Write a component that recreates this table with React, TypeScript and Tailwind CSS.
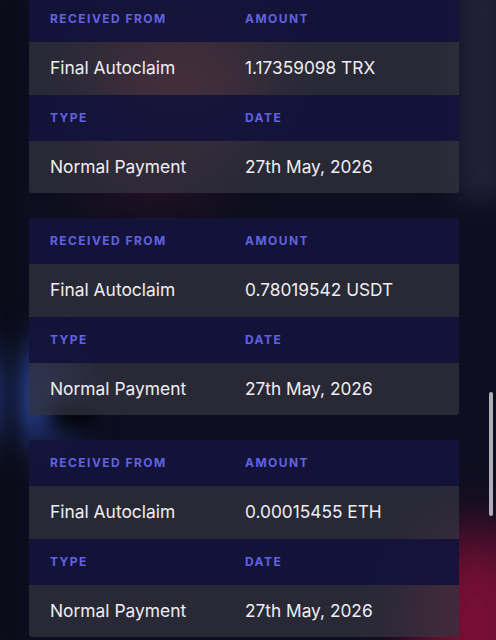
import React from 'react';

type Payment = {
  from: string;
  amount: string;
  type: string;
  date: string;
};

const payments: Payment[] = [
  { from: 'Final Autoclaim', amount: '1.17359098 TRX', type: 'Normal Payment', date: '27th May, 2026' },
  { from: 'Final Autoclaim', amount: '0.78019542 USDT', type: 'Normal Payment', date: '27th May, 2026' },
  { from: 'Final Autoclaim', amount: '0.00015455 ETH', type: 'Normal Payment', date: '27th May, 2026' },
];

const LabelRow = ({ left, right }: { left: string; right: string }) => (
  <div className="flex h-[46px] items-center bg-[#14143b]/95 px-[21px]">
    <span className="w-[195px] text-[12px] font-bold tracking-[0.12em] text-[#6062e0]">
      {left}
    </span>
    <span className="text-[12px] font-bold tracking-[0.12em] text-[#6062e0]">
      {right}
    </span>
  </div>
);

const ValueRow = ({ left, right }: { left: string; right: string }) => (
  <div className="flex h-[52.5px] items-center bg-[#33333f]/75 px-[21px]">
    <span className="w-[195px] text-[17.4px] text-[#eeeef3]">{left}</span>
    <span className="text-[17.3px] text-[#eeeef3]">{right}</span>
  </div>
);

const PaymentCard = ({ p }: { p: Payment }) => (
  <div className="flex flex-col overflow-hidden rounded-[3px]">
    <LabelRow left="RECEIVED FROM" right="AMOUNT" />
    <ValueRow left={p.from} right={p.amount} />
    <LabelRow left="TYPE" right="DATE" />
    <ValueRow left={p.type} right={p.date} />
  </div>
);

export default function App() {
  return (
    <div
      className="relative h-[640px] w-[496px] overflow-hidden bg-[#0d0e1f]"
      style={{ fontFamily: 'Inter, "Noto Sans", sans-serif' }}
    >
      {/* background glows */}
      <div className="pointer-events-none absolute inset-0">
        <div className="absolute -right-[10px] -top-[20px] h-[220px] w-[50px] bg-[#23213a] blur-[14px]" />
        <div className="absolute left-[100px] top-[35px] h-[90px] w-[160px] rounded-full bg-[#8a2538] blur-[34px]" />
        <div className="absolute left-[90px] top-[140px] h-[50px] w-[130px] rounded-full bg-[#5a1d34]/60 blur-[30px]" />
        <div className="absolute -left-[20px] top-[350px] h-[90px] w-[100px] rounded-full bg-[#2c48a0]/80 blur-[22px]" />
        <div className="absolute left-[50px] top-[402px] h-[26px] w-[50px] rounded-full bg-[#020206] blur-[9px]" />
        <div className="absolute -right-[40px] top-[530px] h-[190px] w-[120px] rounded-full bg-[#7a0f35] blur-[30px]" />
        <div className="absolute left-0 top-0 h-full w-[22px] bg-[#090a14]/60 blur-[6px]" />
      </div>

      <div className="relative -mt-[4px] flex flex-col gap-[25px] pl-[29px] pr-[37px]">
        {payments.map((p, i) => (
          <PaymentCard key={i} p={p} />
        ))}
      </div>

      {/* scrollbar thumb */}
      <div className="absolute left-[489px] top-[392px] h-[124px] w-[4px] rounded-full bg-[#aeadb8]" />
    </div>
  );
}
